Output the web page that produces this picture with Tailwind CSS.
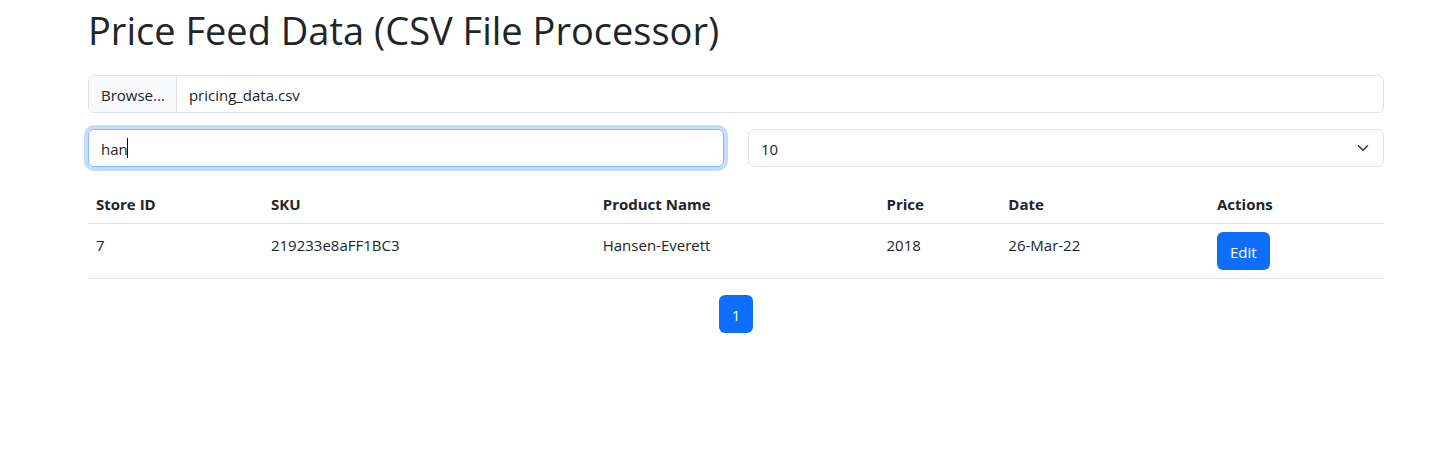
<!DOCTYPE html>
<html lang="en">
<head>
<meta charset="utf-8">
<title>Price Feed Data</title>
<script src="https://cdn.jsdelivr.net/npm/@tailwindcss/browser@4"></script>
</head>
<body class="bg-white pt-[6px] pr-[71px] pl-[88px] font-['Segoe_UI','Open_Sans',sans-serif] text-[15px] leading-6 text-[#212529]">
<main>
  <h1 class="mb-[21px] text-[38px] leading-12 whitespace-nowrap">Price Feed Data (CSV File Processor)</h1>

  <label class="relative mb-4 flex h-[38px] overflow-hidden rounded-md border border-[#dee2e6]">
    <input type="file" accept=".csv" class="sr-only" aria-label="CSV file">
    <span class="border-r border-[#dee2e6] bg-[#f8f9fa] pt-[7px] pr-[11px] pl-3">Browse...</span>
    <span class="px-3 pt-[7px]">pricing_data.csv</span>
  </label>

  <div class="mb-4 grid grid-cols-2 gap-6">
    <div class="relative">
      <input type="text" value="han" aria-label="Search" class="block h-[38px] w-full rounded-md border border-[#86b7fe] px-3 pt-[2px] caret-transparent ring-4 ring-[#c2dbfe] outline-none">
      <span class="absolute top-[9px] left-[39px] h-5 w-px bg-black"></span>
    </div>
    <div class="relative">
      <select aria-label="Rows per page" class="block h-[38px] w-full appearance-none rounded-md border border-[#dee2e6] bg-white pt-[2px] pr-9 pl-3">
        <option>10</option><option>20</option><option>50</option>
      </select>
      <svg class="pointer-events-none absolute top-[13px] right-[15px] size-3" viewBox="0 0 16 16" fill="none" stroke="#343a40" stroke-width="2" stroke-linecap="round" stroke-linejoin="round"><path d="m2 5 6 6 6-6"/></svg>
    </div>
  </div>

  <table class="mb-4 w-full table-fixed text-left">
    <thead>
      <tr class="border-b border-[#dee2e6]">
        <th class="w-[13.5%] px-2 pt-[9px] pb-[7px] font-bold">Store ID</th>
        <th class="w-[25.6%] px-2 pt-[9px] pb-[7px] font-bold">SKU</th>
        <th class="w-[21.9%] px-2 pt-[9px] pb-[7px] font-bold">Product Name</th>
        <th class="w-[9.4%] px-2 pt-[9px] pb-[7px] font-bold">Price</th>
        <th class="w-[16.1%] px-2 pt-[9px] pb-[7px] font-bold">Date</th>
        <th class="px-2 pt-[9px] pb-[7px] font-bold">Actions</th>
      </tr>
    </thead>
    <tbody>
      <tr class="border-b border-[#dee2e6] align-top">
        <td class="px-2 py-[9px]">7</td>
        <td class="px-2 py-[9px]">219233e8aFF1BC3</td>
        <td class="px-2 py-[9px]">Hansen-Everett</td>
        <td class="px-2 py-[9px]">2018</td>
        <td class="px-2 py-[9px]">26-Mar-22</td>
        <td class="p-2"><button type="button" class="block h-[38px] rounded-md bg-[#0d6efd] px-[13px] pt-[2px] text-white">Edit</button></td>
      </tr>
    </tbody>
  </table>

  <nav aria-label="Pages" class="flex justify-center">
    <a href="#" aria-current="page" class="h-[38px] rounded-md bg-[#0d6efd] px-[13px] pt-2 text-white">1</a>
  </nav>
</main>
</body>
</html>
